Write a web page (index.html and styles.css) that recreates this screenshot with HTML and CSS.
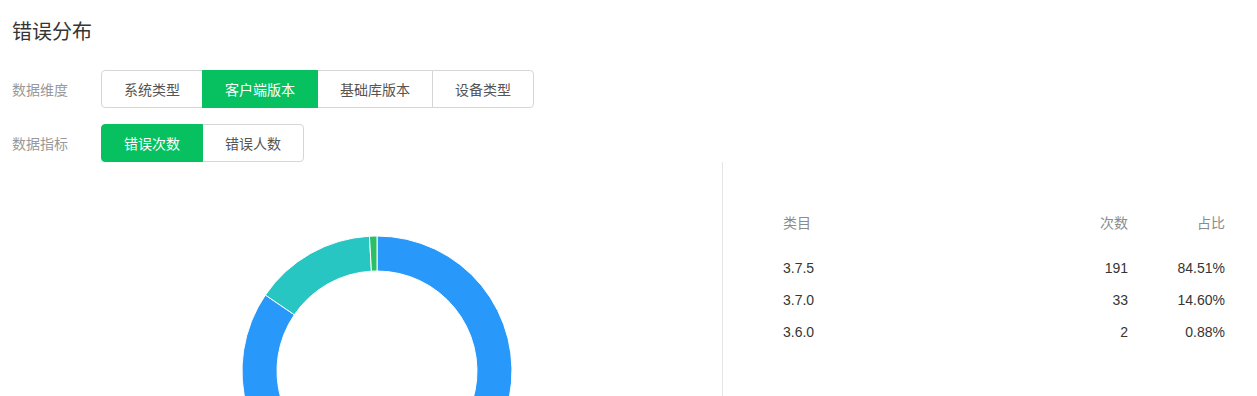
FILE: index.html
```html
<!DOCTYPE html>
<html lang="zh-CN">
<head>
  <meta charset="UTF-8">
  <meta name="viewport" content="width=device-width, initial-scale=1.0">
  <title>错误分布</title>
  <link rel="stylesheet" href="styles.css">
</head>
<body>
  <div class="page">
    <h2 class="title">错误分布</h2>

    <div class="filters">
      <div class="filter-row">
        <span class="filter-label">数据维度</span>
        <div class="btn-group">
          <button class="btn">系统类型</button>
          <button class="btn active">客户端版本</button>
          <button class="btn">基础库版本</button>
          <button class="btn">设备类型</button>
        </div>
      </div>
      <div class="filter-row">
        <span class="filter-label">数据指标</span>
        <div class="btn-group">
          <button class="btn active">错误次数</button>
          <button class="btn">错误人数</button>
        </div>
      </div>
    </div>

    <div class="content">
      <div class="chart-panel">
        <svg class="donut" width="270" height="270" viewBox="0 0 270 270">
          <path fill="#2898fa" stroke="#fff" stroke-width="1" d="M135,0 A135,135 0 1 1 23.38,59.05 L52.32,78.74 A100,100 0 1 0 135,35 Z"/>
          <path fill="#27c6c3" stroke="#fff" stroke-width="1" d="M23.38,59.05 A135,135 0 0 1 127.46,0.21 L129.41,35.16 A100,100 0 0 0 52.32,78.74 Z"/>
          <path fill="#2bbf66" stroke="#fff" stroke-width="1" d="M127.46,0.21 A135,135 0 0 1 135,0 L135,35 A100,100 0 0 0 129.41,35.16 Z"/>
        </svg>
      </div>
      <div class="table-panel">
        <table class="stat-table">
          <thead>
            <tr><th class="col-name">类目</th><th class="col-num">次数</th><th class="col-pct">占比</th></tr>
          </thead>
          <tbody>
            <tr><td class="col-name">3.7.5</td><td class="col-num">191</td><td class="col-pct">84.51%</td></tr>
            <tr><td class="col-name">3.7.0</td><td class="col-num">33</td><td class="col-pct">14.60%</td></tr>
            <tr><td class="col-name">3.6.0</td><td class="col-num">2</td><td class="col-pct">0.88%</td></tr>
          </tbody>
        </table>
      </div>
    </div>
  </div>
</body>
</html>
```

FILE: styles.css
```css
body {
  margin: 0;
  font-family: "Liberation Sans", "Noto Sans CJK SC", sans-serif;
  color: #353535;
  background: #fff;
  overflow: hidden;
}
.page {
  padding: 18px 0 0 12px;
}
.title {
  margin: 0 0 24px;
  font-size: 20px;
  line-height: 28px;
  font-weight: normal;
  color: #353535;
}
.filters {
  display: flex;
  flex-direction: column;
  gap: 16px;
}
.filter-row {
  display: flex;
  align-items: center;
}
.filter-label {
  width: 89px;
  font-size: 14px;
  color: #999;
}
.btn-group {
  display: flex;
}
.btn {
  height: 38px;
  padding: 0 22px;
  margin-left: -1px;
  font-family: inherit;
  font-size: 14px;
  color: #555;
  background: #fff;
  border: 1px solid #d6d6d6;
  border-radius: 0;
  cursor: pointer;
}
.btn:first-child {
  margin-left: 0;
  border-radius: 4px 0 0 4px;
}
.btn:last-child {
  border-radius: 0 4px 4px 0;
}
.btn.active {
  background: #07c160;
  border-color: #07c160;
  color: #fff;
  position: relative;
}
.content {
  display: flex;
  height: 235px;
}
.chart-panel {
  width: 710px;
  overflow: hidden;
}
.donut {
  display: block;
  margin: 74px 0 0 230px;
}
.table-panel {
  flex: 1;
  border-left: 1px solid #e5e5e5;
  padding: 44px 32px 0 60px;
}
.stat-table {
  width: 442px;
  border-collapse: collapse;
  font-size: 14px;
}
.stat-table th {
  font-weight: normal;
  color: #8c8c8c;
  height: 32px;
  padding: 0 0 14px;
}
.stat-table td {
  height: 32px;
  padding: 0;
  color: #353535;
}
.col-name {
  text-align: left;
}
.col-num {
  text-align: right;
}
.col-pct {
  width: 97px;
  text-align: right;
}
```
